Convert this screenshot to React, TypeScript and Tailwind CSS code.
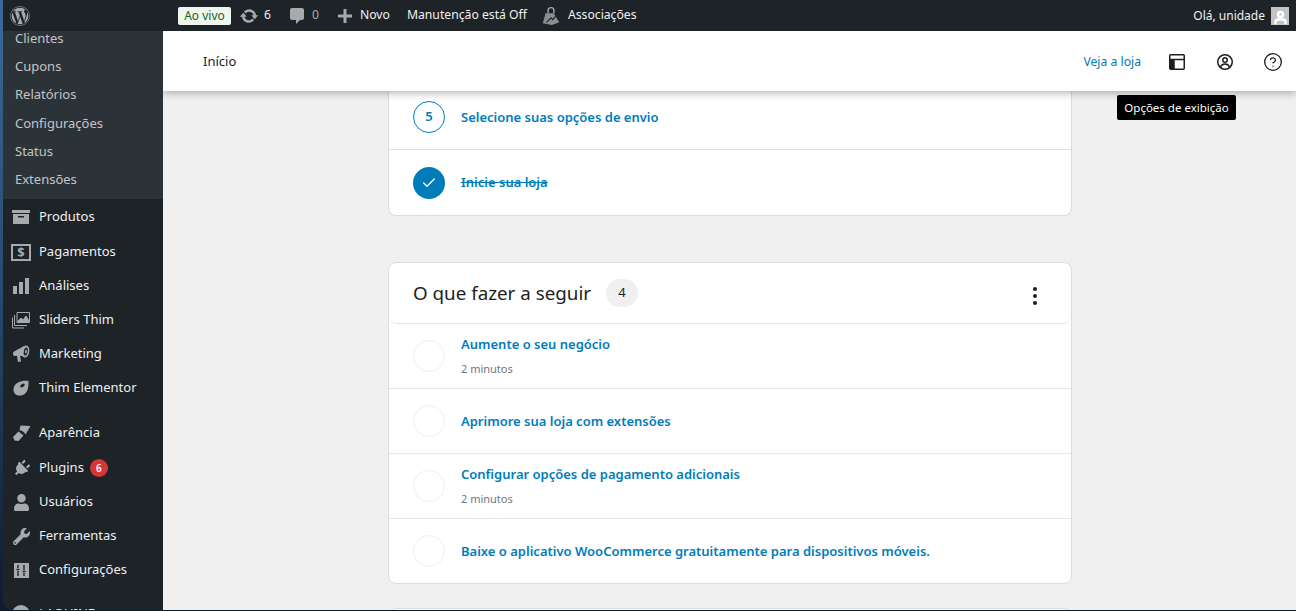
import { FaWordpress, FaUser, FaWrench, FaPlug } from 'react-icons/fa';
import { FiUser } from 'react-icons/fi';
import { HelpCircle, Check } from 'lucide-react';
import type { ReactNode } from 'react';

const subItems = ['Clientes', 'Cupons', 'Relatórios', 'Configurações', 'Status', 'Extensões'];

const ArchiveIcon = () => (
  <svg viewBox="0 0 20 20" className="w-[20px] h-[20px]" fill="#a7aaad">
    <path d="M1 3h18v3H1zM2 7h16v10H2zm5 2v1.500h6V9z" fillRule="evenodd" />
  </svg>
);
const PayIcon = () => (
  <div className="w-[20px] h-[17px] border-2 border-[#a7aaad] flex items-center justify-center text-[13px] font-bold leading-none text-[#a7aaad]">$</div>
);
const BarsIcon = () => (
  <svg viewBox="0 0 20 20" className="w-[20px] h-[20px]" fill="#a7aaad">
    <path d="M2 10h4v8H2zM8 6h4v12H8zM14 2h4v16h-4z" />
  </svg>
);
const SlidesIcon = () => (
  <svg viewBox="0 0 20 20" className="w-[20px] h-[20px]" fill="none" stroke="#a7aaad" strokeWidth="1">
    <path d="M6 2.500h12.500v10H6z" />
    <path d="M7 11l3-3 2 2 3-4 3 5v1H7z" fill="#a7aaad" />
    <path d="M3.500 5v10.500H16M1.500 7.500v10.500H13" />
  </svg>
);
const MegaphoneIcon = () => (
  <svg viewBox="0 0 20 20" className="w-[20px] h-[20px]" fill="#a7aaad">
    <path d="M13 2 L3 7.500 Q1.500 8.500 2 10.500 Q2.500 12 4 12 L6 11.800 L7 18 L10 17.500 L9 11.800 L15 13 Z" />
    <ellipse cx="14.500" cy="7.500" rx="3.800" ry="6" transform="rotate(10 14.500 7.500)" />
    <ellipse cx="14.800" cy="7.500" rx="2" ry="4" transform="rotate(10 14.800 7.500)" fill="#1d2327" />
    <ellipse cx="15" cy="7.500" rx="0.900" ry="2" fill="#a7aaad" />
  </svg>
);
const ThimIcon = () => (
  <svg viewBox="0 0 20 20" className="w-[20px] h-[20px]" fill="#a7aaad">
    <path d="M17.500 3C12 2 3 4 2.500 11c-.4 5 3.500 7 7.500 6.500 5-.5 8-5.500 7.500-14.500z" />
    <ellipse cx="11.500" cy="7.500" rx="2.600" ry="1.500" transform="rotate(-35 11.500 7.500)" fill="#1d2327" />
  </svg>
);
const BrushIcon = () => (
  <svg viewBox="0 0 20 20" className="w-[20px] h-[20px]" fill="#a7aaad">
    <path d="M9.500 2.500 L19.500 3 L14.500 11.500 Q13.500 9.500 12 8.500 Q10.500 7.500 8.500 7 Z" />
    <path d="M7.500 8.500 L12.500 12.500 L7.500 18 L3.500 17.500 L2 14 Z" />
  </svg>
);
const SettingsIcon = () => (
  <svg viewBox="0 0 20 20" className="w-[20px] h-[20px]">
    <path d="M3 3h15v15H3z" fill="#a7aaad" />
    <path d="M7 5v3M7 11v5M13 5v5M13 13v3M5.500 9.500h3M11.500 11.500h3" stroke="#1d2327" strokeWidth="1.400" />
  </svg>
);
const UpdateIcon = () => (
  <svg viewBox="0 0 20 20" className="w-[20px] h-[20px]" fill="#a7aaad">
    <path d="M10.200 3.280c3.530 0 6.430 2.610 6.920 6h2.080l-3.500 4-3.500-4h2.320c-.45-1.970-2.210-3.440-4.320-3.440-1.450 0-2.730.71-3.540 1.780L4.950 5.660C6.230 4.200 8.110 3.280 10.200 3.280zm-.4 13.440c-3.520 0-6.430-2.610-6.920-6H.8l3.500-4c1.170 1.330 2.330 2.670 3.500 4H5.480c.45 1.970 2.210 3.440 4.320 3.440 1.450 0 2.730-.71 3.540-1.780l1.710 1.950c-1.280 1.460-3.150 2.390-5.250 2.390z" />
  </svg>
);
const CommentIcon = () => (
  <svg viewBox="0 0 20 20" className="w-[20px] h-[20px]" fill="#a7aaad">
    <path d="M5 2h10c1.100 0 2 .9 2 2v8c0 1.100-.9 2-2 2h-2l-4 4v-4H5c-1.100 0-2-.9-2-2V4c0-1.100.9-2 2-2z" />
  </svg>
);
const PlusIcon = () => (
  <svg viewBox="0 0 20 20" className="w-[20px] h-[20px]" fill="#a7aaad">
    <path d="M8.500 3h3v5.500H17v3h-5.500V17h-3v-5.500H3v-3h5.500z" />
  </svg>
);
const BagIcon = () => (
  <svg viewBox="0 0 22 22" className="w-[20px] h-[20px]" fill="#a7aaad">
    <path d="M7 8V5a4 4 0 0 1 8 0v3h-1.500V5a2.500 2.500 0 0 0-5 0v3z" />
    <path d="M5 8h9l6 10-8 3-10-2z" opacity="0.8" />
    <path d="M6 18l5-5 2 2 5-6" stroke="#1d2327" strokeWidth="1.200" fill="none" />
  </svg>
);
const LayoutIcon = () => (
  <svg viewBox="0 0 24 24" className="w-[24px] h-[24px]" fill="none" stroke="#1e1e1e" strokeWidth="1.500">
    <rect x="4.750" y="4.750" width="14.500" height="14.500" rx="1" />
    <path d="M4.750 9.500h14.500" />
    <path d="M4.750 9.500h5v9.750h-4a1 1 0 0 1-1-1z" fill="#1e1e1e" stroke="none" />
  </svg>
);
const AccountIcon = () => (
  <svg viewBox="0 0 24 24" className="w-[24px] h-[24px]" fill="none" stroke="#1e1e1e" strokeWidth="1.500">
    <circle cx="12" cy="12" r="7.250" />
    <circle cx="12" cy="10" r="2.250" />
    <path d="M7.500 17c.8-2 2.500-3 4.500-3s3.700 1 4.500 3" />
  </svg>
);

type Item = { label: string; icon: ReactNode; h: string; badge?: string };

// first row of each group is a pixel taller, text stays centred in the upper 35px
const mainGroupA: Item[] = [
  { label: 'Produtos', icon: <ArchiveIcon />, h: 'h-[36px] pb-[1px]' },
  { label: 'Pagamentos', icon: <PayIcon />, h: 'h-[34px]' },
  { label: 'Análises', icon: <BarsIcon />, h: 'h-[34px]' },
  { label: 'Sliders Thim', icon: <SlidesIcon />, h: 'h-[34px]' },
  { label: 'Marketing', icon: <MegaphoneIcon />, h: 'h-[34px]' },
  { label: 'Thim Elementor', icon: <ThimIcon />, h: 'h-[34px]' },
];
const mainGroupB: Item[] = [
  { label: 'Aparência', icon: <BrushIcon />, h: 'h-[36px] pb-[1px]' },
  { label: 'Plugins', icon: <FaPlug className="text-[#a7aaad] rotate-45" size={17} />, badge: '6', h: 'h-[34px]' },
  { label: 'Usuários', icon: <FaUser className="text-[#a7aaad]" size={17} />, h: 'h-[34px]' },
  { label: 'Ferramentas', icon: <FaWrench className="text-[#a7aaad]" size={17} />, h: 'h-[34px]' },
  { label: 'Configurações', icon: <SettingsIcon />, h: 'h-[34px]' },
];

const MenuRow = ({ item }: { item: Item }) => (
  <div className={`flex items-center ${item.h} shrink-0`}>
    <div className="w-[36px] flex items-center justify-center shrink-0">{item.icon}</div>
    <span className="text-[13px] text-[#f0f0f1]">{item.label}</span>
    {item.badge && (
      <span className="ml-[6px] w-[18px] h-[18px] rounded-full bg-[#d63638] text-white text-[10px] font-semibold flex items-center justify-center">{item.badge}</span>
    )}
  </div>
);

const TaskRow = ({ title, time, last }: { title: string; time?: string; last?: boolean }) => (
  <div className={`flex items-center pl-[24px] ${last ? 'h-[64px]' : 'h-[65px] border-b border-[#e6e6e6]'}`}>
    <div className="w-[32px] h-[32px] rounded-full border border-[#efefef] shrink-0" />
    <div className={`ml-[16px] ${time ? 'mb-[2px]' : ''}`}>
      <div className="text-[13px] font-semibold text-[#007cba] leading-[20px]">{title}</div>
      {time && <div className="text-[11px] text-[#757575] mt-[7px] leading-[16px]">{time}</div>}
    </div>
  </div>
);

export default function App() {
  return (
    <div className="h-[611px] w-[1296px] overflow-hidden pl-[3px] pb-[1px] bg-gradient-to-b from-[#3a6a9a] via-[#27486e] to-[#0f1a2e] font-['Noto_Sans',sans-serif]">
      <div className="h-[610px] flex flex-col overflow-hidden rounded-bl-[8px]">
        {/* Admin bar */}
        <div className="h-[31px] shrink-0 bg-[#1d2327] flex items-center text-[12.2px] text-[#f0f0f1]">
          <div className="w-[34px] flex justify-center">
            <FaWordpress className="text-[#a7aaad]" size={20} />
          </div>
          <div className="ml-[141px] flex items-center">
            <span className="bg-[#edf7ee] text-[#1f5f2c] rounded-[2px] h-[18px] w-[53px] flex items-center justify-center text-[12px]">Ao vivo</span>
            <span className="ml-[8px]"><UpdateIcon /></span>
            <span className="ml-[5px]">6</span>
            <span className="ml-[16px]"><CommentIcon /></span>
            <span className="ml-[5px] text-[#a7aaad]">0</span>
            <span className="ml-[16px]"><PlusIcon /></span>
            <span className="ml-[5px]">Novo</span>
            <span className="ml-[17px]">Manutenção está Off</span>
            <span className="ml-[14px]"><BagIcon /></span>
            <span className="ml-[7px]">Associações</span>
          </div>
          <div className="ml-auto flex items-center pr-[7px]">
            <span className="text-[12px]">Olá, unidade</span>
            <span className="ml-[6px] w-[18px] h-[18px] bg-[#c4c4c4] flex items-end justify-center overflow-hidden">
              <FiUser className="text-white" size={15} strokeWidth={4} />
            </span>
          </div>
        </div>

        <div className="flex-1 flex min-h-0">
          {/* Sidebar */}
          <aside className="w-[160px] shrink-0 bg-[#1d2327] flex flex-col overflow-hidden">
            <div className="h-[174.500px] shrink-0 bg-[#2c3338] -mt-[6.500px] flex flex-col">
              {subItems.map((s) => (
                <div key={s} className="h-[28.300px] flex items-center pl-[12px] text-[13px] text-[#c3c4c7] shrink-0">{s}</div>
              ))}
            </div>
            <div className="flex flex-col">
              {mainGroupA.map((i) => <MenuRow key={i.label} item={i} />)}
            </div>
            <div className="mt-[10px] flex flex-col">
              {mainGroupB.map((i) => <MenuRow key={i.label} item={i} />)}
            </div>
            <div className="mt-[10px] flex items-center h-[34px] shrink-0">
              <div className="w-[36px] flex justify-center">
                <div className="w-[18px] h-[18px] rounded-full bg-[#a7aaad]" />
              </div>
              <span className="text-[13px] text-[#f0f0f1]">LAQUINE</span>
            </div>
          </aside>

          {/* Content */}
          <main className="flex-1 bg-[#f0f0f0] flex flex-col min-w-0 relative overflow-hidden">
            <header className="relative z-10 h-[60px] shrink-0 bg-white shadow-[0_2px_8px_rgba(0,0,0,0.3)] flex items-center pt-[2px] pl-[40px] pr-[11px]">
              <span className="text-[13px] text-[#1e1e1e]">Início</span>
              <div className="ml-auto flex items-center">
                <span className="text-[12.200px] text-[#007cba]">Veja a loja</span>
                <span className="ml-[24px]"><LayoutIcon /></span>
                <span className="ml-[24px]"><AccountIcon /></span>
                <span className="ml-[24px]"><HelpCircle size={20} strokeWidth={1.600} className="m-[2px] text-[#1e1e1e]" /></span>
              </div>
            </header>
            <div className="absolute z-20 left-[954px] top-[64px] h-[25px] w-[119px] bg-black rounded-[2px] text-white text-[11.500px] flex items-center justify-center">Opções de exibição</div>

            <div className="w-[684px] ml-[225px] flex flex-col">
              <section className="bg-white border border-t-0 border-[#dcdcde] rounded-b-[8px]">
                <div className="flex items-center h-[59px] pb-[6px] pl-[24px] border-b border-[#e0e0e0]">
                  <div className="w-[32px] h-[32px] rounded-full border border-[#007cba] text-[#007cba] text-[13px] font-semibold flex items-center justify-center shrink-0">5</div>
                  <span className="ml-[16px] mt-[1px] text-[13px] font-semibold text-[#007cba]">Selecione suas opções de envio</span>
                </div>
                <div className="flex items-center h-[65px] pl-[24px]">
                  <div className="w-[32px] h-[32px] rounded-full bg-[#007cba] flex items-center justify-center shrink-0">
                    <Check size={16} strokeWidth={2} className="text-white" />
                  </div>
                  <span className="ml-[16px] text-[13px] font-semibold text-[#007cba] line-through">Inicie sua loja</span>
                </div>
              </section>

              <section className="mt-[46px] bg-white border border-[#dcdcde] rounded-[8px]">
                <div className="h-[61px] flex items-center pl-[24px] pr-[24px] rounded-[8px] border-b border-[#e6e6e6]">
                  <h2 className="text-[18.800px] mt-[1px] text-[#1e1e1e] font-normal">O que fazer a seguir</h2>
                  <span className="ml-[15px] w-[32px] h-[28px] rounded-full bg-[#f0f0f0] flex items-center justify-center text-[13px] text-[#1e1e1e]">4</span>
                  <div className="ml-auto flex flex-col gap-[3px] mr-[10px] mt-[6px]">
                    <span className="w-[4px] h-[4px] rounded-full bg-[#1e1e1e]" />
                    <span className="w-[4px] h-[4px] rounded-full bg-[#1e1e1e]" />
                    <span className="w-[4px] h-[4px] rounded-full bg-[#1e1e1e]" />
                  </div>
                </div>
                <TaskRow title="Aumente o seu negócio" time="2 minutos" />
                <TaskRow title="Aprimore sua loja com extensões" />
                <TaskRow title="Configurar opções de pagamento adicionais" time="2 minutos" />
                <TaskRow title="Baixe o aplicativo WooCommerce gratuitamente para dispositivos móveis." last />
              </section>

              <section className="mt-[24px] h-[60px] bg-white border border-[#dcdcde] rounded-[8px]" />
            </div>
          </main>
        </div>
      </div>
    </div>
  );
}
